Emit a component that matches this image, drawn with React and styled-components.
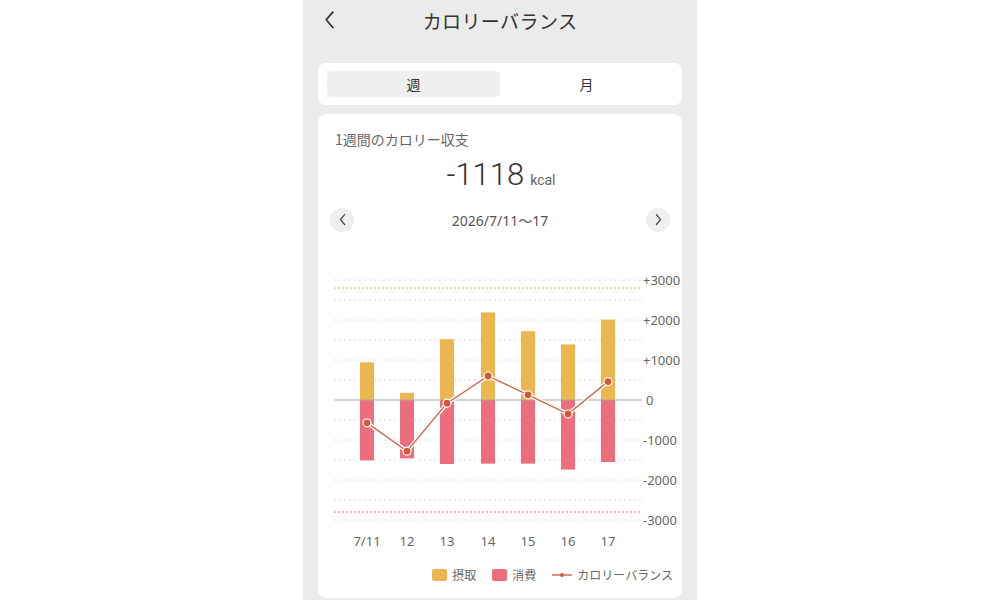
import React, { useState } from "react";
import styled, { createGlobalStyle } from "styled-components";

const GlobalStyle = createGlobalStyle`
  html, body {
    margin: 0;
    padding: 0;
    background: #ffffff;
  }
  body {
    font-family: "Noto Sans CJK JP", "Noto Sans", sans-serif;
    color: #333;
  }
`;

const Screen = styled.div`
  width: 394px;
  height: 600px;
  margin: 0 auto;
  background: #ebebeb;
  overflow: hidden;
  display: flex;
  flex-direction: column;
`;

const Header = styled.header`
  height: 40px;
  display: grid;
  grid-template-columns: 48px 1fr 48px;
  align-items: center;
`;

const BackButton = styled.button`
  border: 0;
  background: none;
  padding: 0 0 0 21px;
  height: 40px;
  display: flex;
  align-items: center;
  color: #333;
`;

const Title = styled.h1`
  margin: 0;
  text-align: center;
  font-size: 19px;
  font-weight: 400;
  letter-spacing: 0.4px;
  color: #333;
`;

const TabCard = styled.div`
  margin: 23px 15px 0;
  background: #fff;
  border-radius: 8px;
  padding: 8px 9px;
  display: grid;
  grid-template-columns: 1fr 1fr;
`;

const Tab = styled.button`
  border: 0;
  height: 26px;
  border-radius: 4px;
  font-family: inherit;
  font-size: 14px;
  color: #333;
  background: ${(p) => (p.$active ? "#efefef" : "transparent")};
`;

const Card = styled.section`
  margin: 9px 15px 0;
  background: #fff;
  border-radius: 8px;
  padding: 16px 0 0;
  height: 484px;
  box-sizing: border-box;
`;

const CardTitle = styled.div`
  padding: 0 17px;
  font-size: 14px;
  line-height: 18px;
  color: #666;
`;

const Total = styled.div`
  margin-top: 8px;
  display: flex;
  justify-content: center;
  align-items: baseline;
  gap: 6px;
  padding-left: 2px;
`;

const TotalValue = styled.span`
  font-family: Roboto, "Liberation Sans", sans-serif;
  font-size: 31px;
  font-weight: 300;
  line-height: 38px;
  color: #333;
`;

const Unit = styled.span`
  font-family: Roboto, "Liberation Sans", sans-serif;
  font-size: 14px;
  color: #666;
`;

const DateRow = styled.div`
  margin-top: 14px;
  padding: 0 12px;
  display: flex;
  align-items: center;
  justify-content: space-between;
`;

const RoundButton = styled.button`
  width: 24px;
  height: 24px;
  border-radius: 50%;
  border: 0;
  padding: 0;
  background: #efefef;
  display: flex;
  align-items: center;
  justify-content: center;
  color: #444;
`;

const DateText = styled.span`
  font-family: "Noto Sans", "Noto Sans CJK JP", sans-serif;
  font-size: 14px;
  color: #555;
`;

const ChartSvg = styled.svg`
  display: block;
  margin-top: 17px;
`;

const Legend = styled.div`
  display: flex;
  justify-content: flex-end;
  align-items: center;
  padding-right: 9px;
  margin-top: 17px;
  gap: 16px;
  font-size: 12px;
  color: #666;
`;

const LegendItem = styled.div`
  display: flex;
  align-items: center;
  gap: 5px;
`;

const Swatch = styled.span`
  width: 15px;
  height: 12px;
  border-radius: 2px;
  background: ${(p) => p.$color};
`;

const ORANGE = "#ebb54f";
const PINK = "#ec6d7b";
const LINE = "#cf5a3a";

const days = [
  { label: "7/11", intake: 940, burn: 1510 },
  { label: "12", intake: 180, burn: 1460 },
  { label: "13", intake: 1520, burn: 1600 },
  { label: "14", intake: 2190, burn: 1590 },
  { label: "15", intake: 1720, burn: 1590 },
  { label: "16", intake: 1390, burn: 1740 },
  { label: "17", intake: 2010, burn: 1550 },
];

const Chevron = ({ dir = "left", size = 12, stroke = 1.6 }) => (
  <svg width={size} height={size * 1.6} viewBox="0 0 10 16" fill="none">
    <path
      d={dir === "left" ? "M8 1 L2 8 L8 15" : "M2 1 L8 8 L2 15"}
      stroke="currentColor"
      strokeWidth={stroke}
      strokeLinecap="round"
      strokeLinejoin="round"
    />
  </svg>
);

const Chart = () => {
  const zeroY = 151;
  const scale = 0.04;
  const left = 16;
  const right = 324;
  const y = (v) => zeroY - v * scale;
  const xs = [49, 89, 129, 170, 210, 250, 290];
  const grid = [];
  for (let v = 3000; v >= -3000; v -= 500) grid.push(v);
  const ticks = [3000, 2000, 1000, 0, -1000, -2000, -3000];
  const pts = days.map((d, i) => [xs[i], y(d.intake - d.burn)]);
  const poly = pts.map((p) => p.join(",")).join(" ");

  return (
    <ChartSvg width="363" height="300" viewBox="0 0 363 300">
      {grid.map((v) =>
        v === 0 ? null : (
          <line key={v} x1={left} x2={right} y1={y(v)} y2={y(v)} stroke="#dcdcdc" strokeWidth="1" strokeDasharray="2 3" />
        )
      )}
      <line x1={left} x2={right} y1={y(2800)} y2={y(2800)} stroke={ORANGE} strokeWidth="1.2" strokeDasharray="2 2" />
      <line x1={left} x2={right} y1={y(-2800)} y2={y(-2800)} stroke={PINK} strokeWidth="1.2" strokeDasharray="2 2" />
      {days.map((d, i) => (
        <g key={d.label}>
          <rect x={xs[i] - 7} y={y(d.intake)} width="14" height={d.intake * scale} fill={ORANGE} />
          <rect x={xs[i] - 7} y={zeroY} width="14" height={d.burn * scale} fill={PINK} />
        </g>
      ))}
      <line x1={left} x2={right} y1={zeroY} y2={zeroY} stroke="#a8a8a8" strokeWidth="1.2" />
      <polyline points={poly} fill="none" stroke="#fff" strokeWidth="4" strokeLinejoin="round" />
      <polyline points={poly} fill="none" stroke={LINE} strokeWidth="1.3" strokeLinejoin="round" />
      {pts.map(([px, py], i) => (
        <circle key={i} cx={px} cy={py} r="4" fill={LINE} stroke="#fff" strokeWidth="1.2" />
      ))}
      {ticks.map((v) => (
        <text
          key={v}
          x={v === 0 ? 328 : 325}
          y={y(v) + 4.5}
          fontSize="13"
          fill="#666"
          fontFamily="'Noto Sans', 'Liberation Sans', sans-serif"
        >
          {v > 0 ? `+${v}` : v}
        </text>
      ))}
      {days.map((d, i) => (
        <text
          key={d.label}
          x={xs[i]}
          y={297}
          textAnchor="middle"
          fontSize="13"
          fill="#666"
          fontFamily="'Noto Sans', 'Liberation Sans', sans-serif"
        >
          {d.label}
        </text>
      ))}
    </ChartSvg>
  );
};

const App = () => {
  const [tab, setTab] = useState("week");
  return (
    <>
      <GlobalStyle />
      <Screen>
        <Header>
          <BackButton aria-label="戻る">
            <Chevron dir="left" size={11} stroke={1.6} />
          </BackButton>
          <Title>カロリーバランス</Title>
          <span />
        </Header>
        <TabCard>
          <Tab $active={tab === "week"} onClick={() => setTab("week")}>週</Tab>
          <Tab $active={tab === "month"} onClick={() => setTab("month")}>月</Tab>
        </TabCard>
        <Card>
          <CardTitle>1週間のカロリー収支</CardTitle>
          <Total>
            <TotalValue>-1118</TotalValue>
            <Unit>kcal</Unit>
          </Total>
          <DateRow>
            <RoundButton aria-label="前の週">
              <Chevron dir="left" size={7} stroke={1.8} />
            </RoundButton>
            <DateText>2026/7/11〜17</DateText>
            <RoundButton aria-label="次の週">
              <Chevron dir="right" size={7} stroke={1.8} />
            </RoundButton>
          </DateRow>
          <Chart />
          <Legend>
            <LegendItem>
              <Swatch $color={ORANGE} />
              摂取
            </LegendItem>
            <LegendItem>
              <Swatch $color={PINK} />
              消費
            </LegendItem>
            <LegendItem>
              <svg width="20" height="8" viewBox="0 0 20 8">
                <line x1="0" x2="20" y1="4" y2="4" stroke={LINE} strokeWidth="1.3" />
                <circle cx="10" cy="4" r="2" fill={LINE} />
              </svg>
              カロリーバランス
            </LegendItem>
          </Legend>
        </Card>
      </Screen>
    </>
  );
};

export default App;
